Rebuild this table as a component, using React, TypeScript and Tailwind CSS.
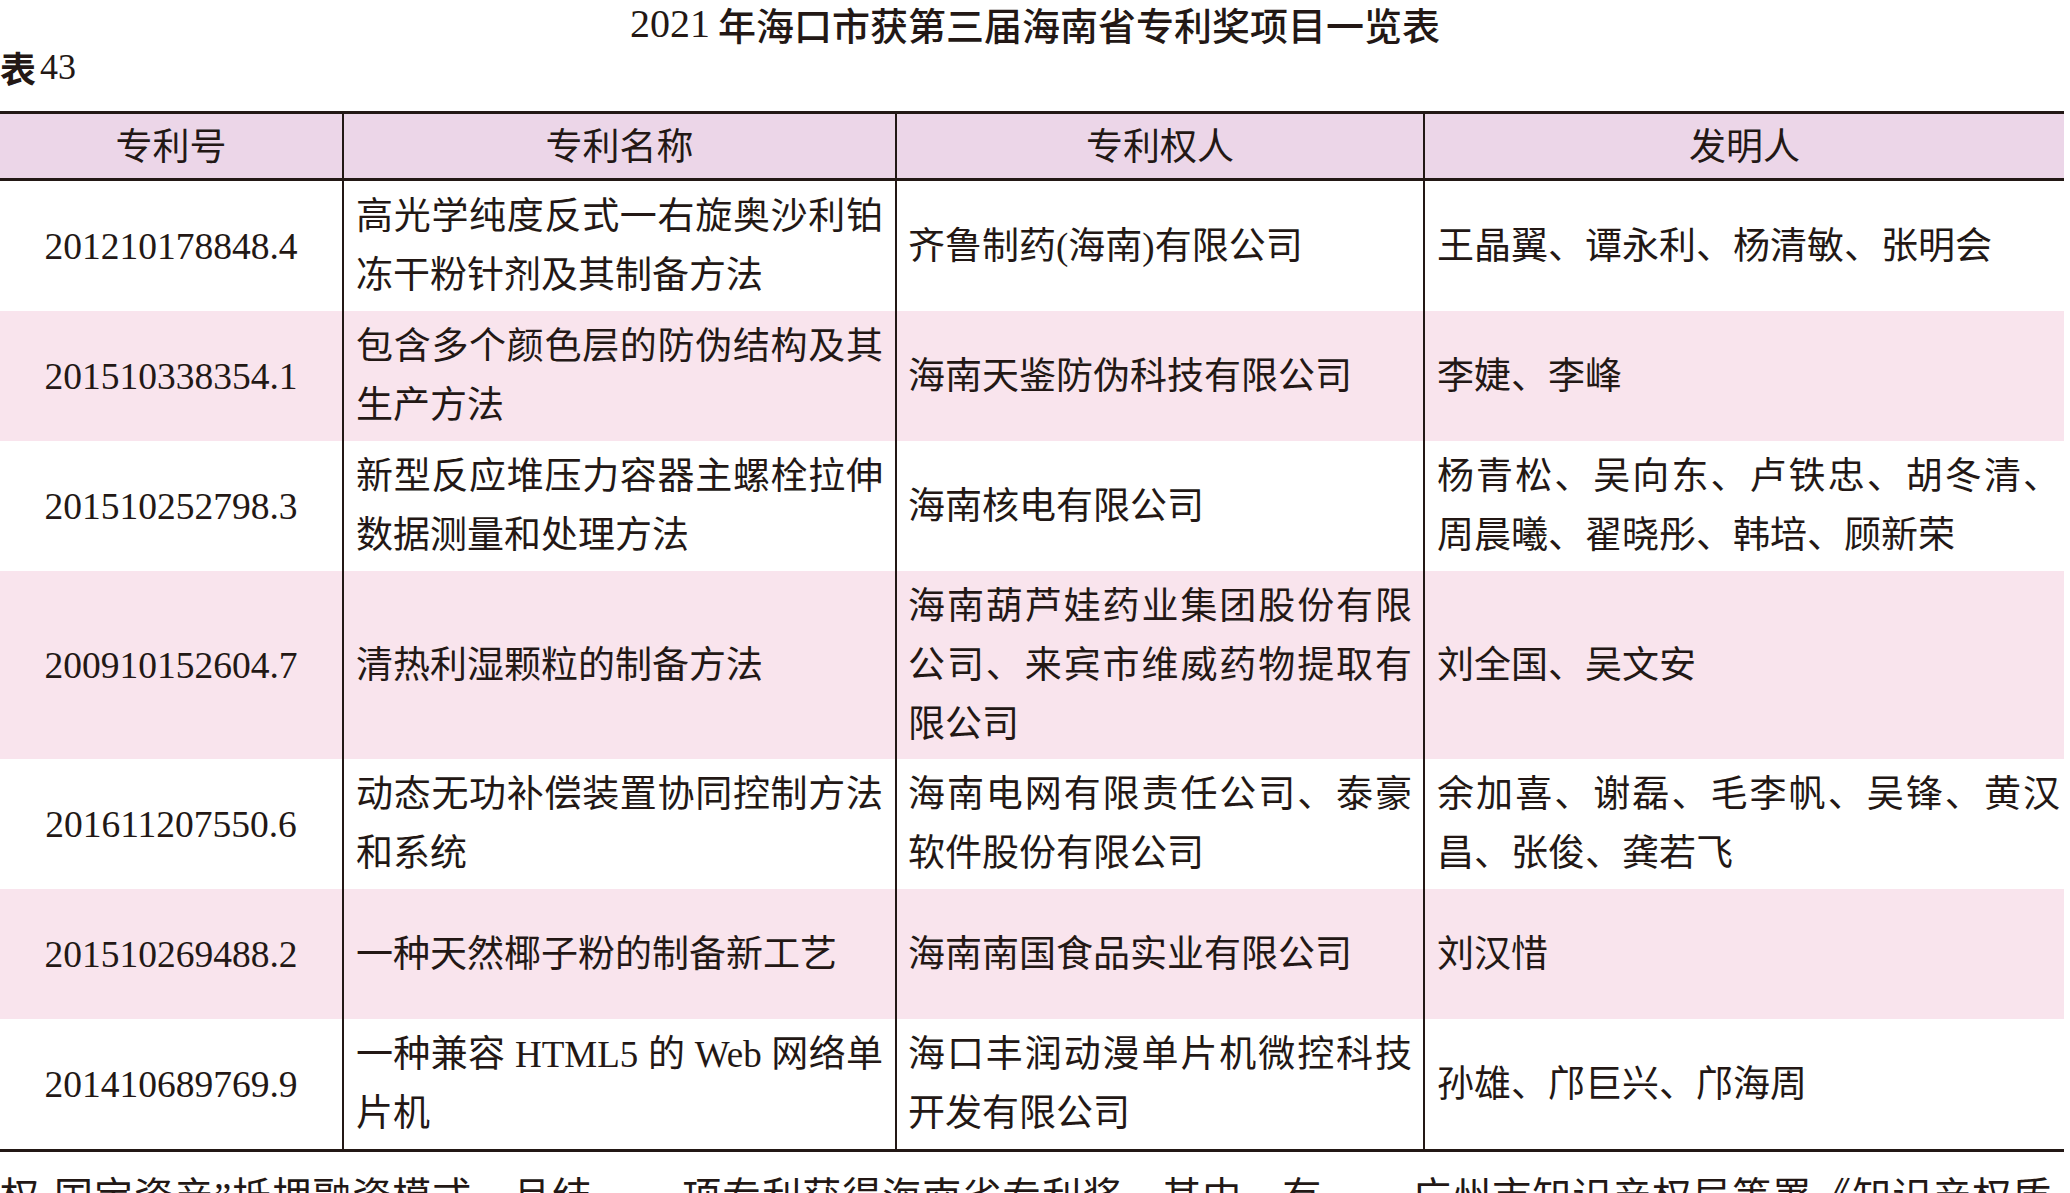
const ink = "text-[#231815]"

type Row = {
  no: string
  name: string[]
  owner: string[]
  inventors: string[]
}

const rows: Row[] = [
  {
    no: "201210178848.4",
    name: ["高光学纯度反式一右旋奥沙利铂", "冻干粉针剂及其制备方法"],
    owner: ["齐鲁制药(海南)有限公司"],
    inventors: ["王晶翼、谭永利、杨清敏、张明会"],
  },
  {
    no: "201510338354.1",
    name: ["包含多个颜色层的防伪结构及其", "生产方法"],
    owner: ["海南天鉴防伪科技有限公司"],
    inventors: ["李婕、李峰"],
  },
  {
    no: "201510252798.3",
    name: ["新型反应堆压力容器主螺栓拉伸", "数据测量和处理方法"],
    owner: ["海南核电有限公司"],
    inventors: ["杨青松、吴向东、卢铁忠、胡冬清、", "周晨曦、翟晓彤、韩培、顾新荣"],
  },
  {
    no: "200910152604.7",
    name: ["清热利湿颗粒的制备方法"],
    owner: ["海南葫芦娃药业集团股份有限", "公司、来宾市维威药物提取有", "限公司"],
    inventors: ["刘全国、吴文安"],
  },
  {
    no: "201611207550.6",
    name: ["动态无功补偿装置协同控制方法", "和系统"],
    owner: ["海南电网有限责任公司、泰豪", "软件股份有限公司"],
    inventors: ["余加喜、谢磊、毛李帆、吴锋、黄汉", "昌、张俊、龚若飞"],
  },
  {
    no: "201510269488.2",
    name: ["一种天然椰子粉的制备新工艺"],
    owner: ["海南南国食品实业有限公司"],
    inventors: ["刘汉惜"],
  },
  {
    no: "201410689769.9",
    name: ["一种兼容 HTML5 的 Web 网络单", "片机"],
    owner: ["海口丰润动漫单片机微控科技", "开发有限公司"],
    inventors: ["孙雄、邝巨兴、邝海周"],
  },
]

const Lines = ({ lines }: { lines: string[] }) => (
  <div className="w-full">
    {lines.map((line, i) => (
      <div
        key={i}
        className={
          i < lines.length - 1
            ? "whitespace-pre text-justify [text-align-last:justify]"
            : "whitespace-pre"
        }
      >
        {line}
      </div>
    ))}
  </div>
)

export default function App() {
  return (
    <div
      className={`w-[2070px] h-[1193px] overflow-hidden bg-white ${ink} font-['Liberation_Serif','Noto_Sans_CJK_SC',serif]`}
    >
      <div className="h-[48px] flex items-center justify-center text-[38px] leading-[48px] font-medium">
        <span className="text-[40px]">2021</span>
        <span className="ml-[8px] font-['Noto_Sans_CJK_SC',sans-serif] font-medium">
          年海口市获第三届海南省专利奖项目一览表
        </span>
      </div>

      <div className="h-[38px] flex items-center text-[36px] leading-[38px]">
        <span className="font-['Noto_Sans_CJK_SC',sans-serif] font-bold">表</span>
        <span className="ml-[4px]">43</span>
      </div>

      <div className="mt-[25px] w-[2064px] border-t-[3px] border-b-[3px] border-[#231815] text-[37px] leading-[59px]">
        <div className="grid grid-cols-[342px_553px_528px_641px] h-[67px] bg-[#ecd6e8] border-b-[3px] border-[#231815]">
          <div className="flex items-center justify-center pt-[2px]">专利号</div>
          <div className="flex items-center justify-center pt-[2px] border-l-2 border-[#231815]">专利名称</div>
          <div className="flex items-center justify-center pt-[2px] border-l-2 border-[#231815]">专利权人</div>
          <div className="flex items-center justify-center pt-[2px] border-l-2 border-[#231815]">发明人</div>
        </div>

        {rows.map((row, idx) => {
          const tall = row.owner.length > 2
          return (
            <div
              key={row.no}
              className={`grid grid-cols-[342px_553px_528px_641px] ${tall ? "h-[188px]" : "h-[130px]"} ${
                idx % 2 === 1 ? "bg-[#f9e4ed]" : "bg-white"
              }`}
            >
              <div className="flex items-center justify-center text-[37.5px]">{row.no}</div>
              <div className="flex items-center border-l-2 border-[#231815] pl-[12px] pr-[12px]">
                <Lines lines={row.name} />
              </div>
              <div className="flex items-center border-l-2 border-[#231815] px-[11px]">
                <Lines lines={row.owner} />
              </div>
              <div className="flex items-center border-l-2 border-[#231815] pl-[12px] pr-[4px]">
                <Lines lines={row.inventors} />
              </div>
            </div>
          )
        })}
      </div>

      <div className="mt-[15px] flex items-center text-[39px] leading-[59px] whitespace-nowrap tracking-[1px]">
        <span>权·国宝资产”抵押融资模式，且结</span>
        <span className="inline-block w-[90px]" />
        <span>项专利获得海南省专利奖。其中，有</span>
        <span className="inline-block w-[90px]" />
        <span>广州市知识产权局等署《知识产权质</span>
      </div>
    </div>
  )
}
